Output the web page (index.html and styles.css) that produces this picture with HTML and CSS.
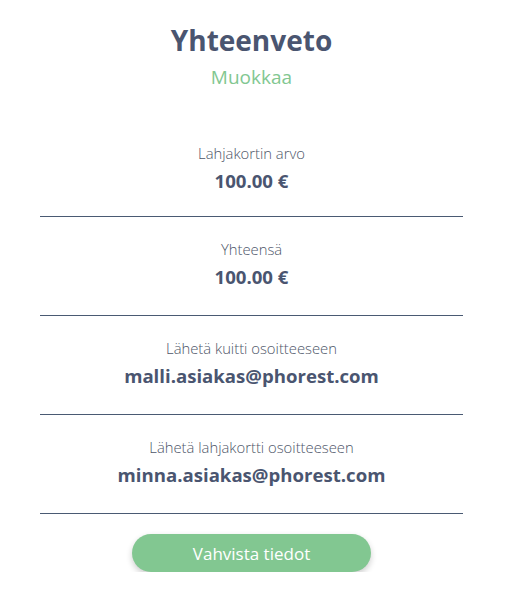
FILE: index.html
```html
<!DOCTYPE html>
<html lang="fi">
<head>
<meta charset="utf-8">
<title>Yhteenveto</title>
<link rel="stylesheet" href="styles.css">
</head>
<body>
<main class="summary">
  <header class="summary-head">
    <h1 class="title">Yhteenveto</h1>
    <a class="edit" href="#">Muokkaa</a>
  </header>
  <section class="row">
    <div class="label">Lahjakortin arvo</div>
    <div class="value">100.00 €</div>
  </section>
  <section class="row">
    <div class="label">Yhteensä</div>
    <div class="value">100.00 €</div>
  </section>
  <section class="row">
    <div class="label">Lähetä kuitti osoitteeseen</div>
    <div class="value">malli.asiakas@phorest.com</div>
  </section>
  <section class="row">
    <div class="label">Lähetä lahjakortti osoitteeseen</div>
    <div class="value">minna.asiakas@phorest.com</div>
  </section>
  <div class="actions">
    <button class="confirm" type="button">Vahvista tiedot</button>
  </div>
</main>
</body>
</html>
```
FILE: styles.css
```css
html, body {
  margin: 0;
  padding: 0;
  background: #ffffff;
}
body {
  font-family: "Open Sans", "Noto Sans", sans-serif;
  color: #4a5570;
}
.summary {
  width: 423px;
  margin-left: 40px;
  display: flex;
  flex-direction: column;
  align-items: stretch;
  text-align: center;
}
.summary-head {
  padding-top: 21px;
  padding-bottom: 28px;
  display: flex;
  flex-direction: column;
  align-items: center;
}
.title {
  margin: 0;
  font-size: 28px;
  font-weight: 700;
  line-height: 38px;
  color: #4a5570;
}
.edit {
  margin-top: 3px;
  font-size: 19px;
  font-weight: 400;
  line-height: 30px;
  color: #82c791;
  text-decoration: none;
}
.row {
  border-bottom: 1px solid #4a5a73;
  padding: 21px 0 19px;
  display: flex;
  flex-direction: column;
  align-items: center;
}
.row + .row {
  padding-top: 20px;
  padding-bottom: 22px;
}
.label {
  font-size: 14.8px;
  font-weight: 300;
  line-height: 24px;
  color: #4d5568;
}
.value {
  font-size: 18.6px;
  font-weight: 700;
  line-height: 32px;
  color: #4a5570;
}
.actions {
  display: flex;
  justify-content: center;
  padding-top: 20px;
}
.confirm {
  width: 239px;
  height: 38px;
  border: none;
  border-radius: 19px;
  background: #82c791;
  color: #ffffff;
  font-family: inherit;
  font-size: 17px;
  font-weight: 400;
  box-shadow: 0 3px 6px rgba(0, 0, 0, 0.2);
  cursor: pointer;
}
```
